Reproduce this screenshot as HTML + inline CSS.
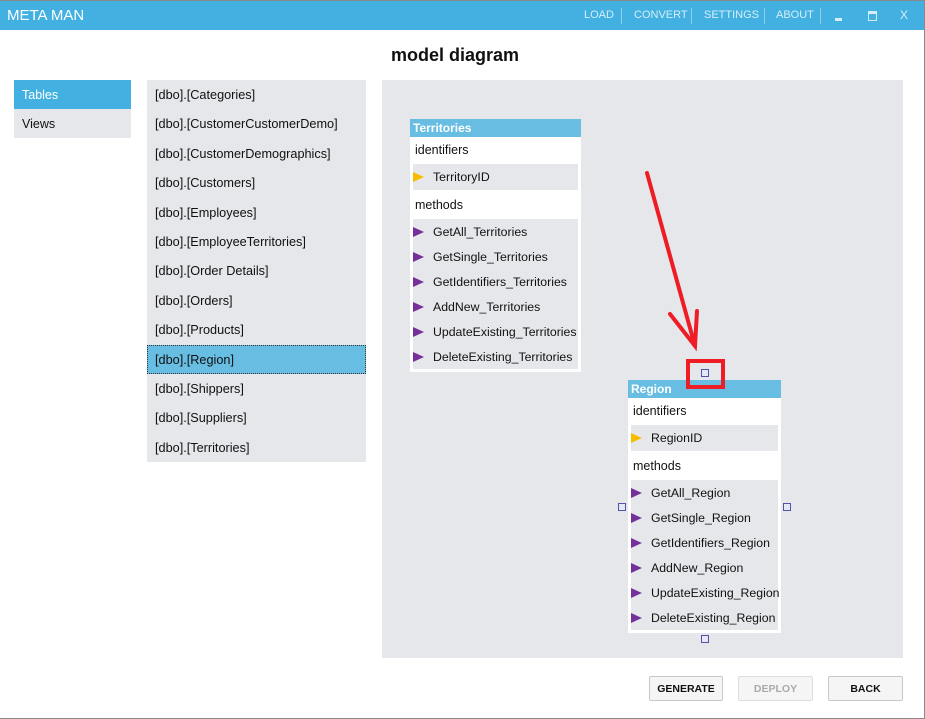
<!DOCTYPE html>
<html><head><meta charset="utf-8"><style>
*{margin:0;padding:0;box-sizing:border-box}
body{width:925px;height:719px;position:relative;overflow:hidden;background:#fff;font-family:"Liberation Sans",Tahoma,sans-serif;font-size:12px;color:#111}
.a{position:absolute}
#frame{left:0;top:0;width:925px;height:719px;border:1px solid #8a8a8a;border-left:none}
#title{left:0;top:1px;width:924px;height:29px;background:#42b0e1;color:#fff}
.nav{top:8px;font-size:11px;color:#d6eefa}
.sep{top:7px;width:1px;height:16px;background:#8fd0ee}
.nv{left:14px;width:117px;height:29px;line-height:30px;padding-left:8px;background:#e6e7eb;font-size:12.5px}
.li{left:147px;width:219px;height:29.4px;line-height:31px;padding-left:8px;background:#e6e7eb;font-size:12.7px}
.box{background:#fff}
.hd{background:#67bde2;color:#fff;font-weight:bold;padding-left:3px;height:18px;line-height:19px;font-size:12px}
.lab{height:27px;line-height:26px;padding-left:5px;font-size:12.5px}
.blk{background:#e6e7eb;margin:0 3px}
.row{height:25px;line-height:26px;padding-left:20px;position:relative;white-space:nowrap;font-size:12.3px}
.row:before{content:"";position:absolute;left:0;top:8px;border-left:11px solid #76309a;border-top:5px solid transparent;border-bottom:5px solid transparent}
.row.k:before{border-left-color:#f6bd00}
.h{width:8px;height:8px;border:1px solid #5252a8;background:#e6e7f4}
.btn{top:676px;height:25px;border:1px solid #c8c8c8;border-radius:2px;background:#f5f5f5;font-weight:bold;font-size:10.5px;text-align:center;line-height:24px}
</style></head><body>
<div class="a" id="title">
<div class="a" style="left:7px;top:6px;font-size:15px;color:#fff">META MAN</div>
<div class="a nav" style="left:584px">LOAD</div><div class="a sep" style="left:621px"></div>
<div class="a nav" style="left:634px">CONVERT</div><div class="a sep" style="left:691px"></div>
<div class="a nav" style="left:704px">SETTINGS</div><div class="a sep" style="left:764px"></div>
<div class="a nav" style="left:776px">ABOUT</div><div class="a sep" style="left:820px"></div>
<div class="a" style="left:835px;top:17px;width:7px;height:3px;background:#d6eefa"></div>
<div class="a" style="left:868px;top:10px;width:9px;height:10px;border:1px solid #d6eefa;border-top-width:3px"></div>
<div class="a nav" style="left:900px;top:7px;font-size:12px">X</div>
</div>
<div class="a" style="left:0;top:45px;width:910px;text-align:center;font-size:18px;font-weight:bold">model diagram</div>
<div class="a nv" style="top:80px;background:#42b0e1;color:#fff">Tables</div>
<div class="a nv" style="top:109px">Views</div>
<div class="a li" style="top:80px">[dbo].[Categories]</div>
<div class="a li" style="top:109.4px">[dbo].[CustomerCustomerDemo]</div>
<div class="a li" style="top:138.8px">[dbo].[CustomerDemographics]</div>
<div class="a li" style="top:168.2px">[dbo].[Customers]</div>
<div class="a li" style="top:197.6px">[dbo].[Employees]</div>
<div class="a li" style="top:227px">[dbo].[EmployeeTerritories]</div>
<div class="a li" style="top:256.4px">[dbo].[Order Details]</div>
<div class="a li" style="top:285.8px">[dbo].[Orders]</div>
<div class="a li" style="top:315.2px">[dbo].[Products]</div>
<div class="a li" style="top:344.6px;background:#67bde2;border:1px dotted #333;line-height:29px;padding-left:7px">[dbo].[Region]</div>
<div class="a li" style="top:374px">[dbo].[Shippers]</div>
<div class="a li" style="top:403.4px">[dbo].[Suppliers]</div>
<div class="a li" style="top:432.8px;height:29px">[dbo].[Territories]</div>
<div class="a" style="left:382px;top:80px;width:521px;height:578px;background:#e6e7eb"></div>
<div class="a box" style="left:410px;top:119px;width:171px;height:253px">
<div class="hd">Territories</div>
<div class="lab">identifiers</div>
<div class="blk"><div class="row k" style="height:26px;line-height:27px">TerritoryID</div></div>
<div class="lab" style="height:29px;line-height:30px">methods</div>
<div class="blk">
<div class="row">GetAll_Territories</div><div class="row">GetSingle_Territories</div><div class="row">GetIdentifiers_Territories</div><div class="row">AddNew_Territories</div><div class="row">UpdateExisting_Territories</div><div class="row">DeleteExisting_Territories</div>
</div></div>
<div class="a box" style="left:628px;top:380px;width:153px;height:253px">
<div class="hd">Region</div>
<div class="lab">identifiers</div>
<div class="blk"><div class="row k" style="height:26px;line-height:27px">RegionID</div></div>
<div class="lab" style="height:29px;line-height:30px">methods</div>
<div class="blk">
<div class="row">GetAll_Region</div><div class="row">GetSingle_Region</div><div class="row">GetIdentifiers_Region</div><div class="row">AddNew_Region</div><div class="row">UpdateExisting_Region</div><div class="row">DeleteExisting_Region</div>
</div></div>
<div class="a h" style="left:701px;top:369px"></div>
<div class="a h" style="left:618px;top:503px"></div>
<div class="a h" style="left:783px;top:503px"></div>
<div class="a h" style="left:701px;top:635px"></div>
<svg class="a" style="left:0;top:0" width="925" height="719">
<g stroke="#ee1c25" stroke-width="4" fill="none" stroke-linecap="round">
<line x1="647" y1="173" x2="695" y2="346"/>
<polyline points="670,314 695,346 697,311"/>
</g>
<rect x="688" y="361" width="35" height="26" stroke="#ee1c25" stroke-width="4" fill="none"/>
</svg>
<div class="a btn" style="left:649px;width:74px">GENERATE</div>
<div class="a btn" style="left:738px;width:75px;color:#aaa;border-color:#ddd">DEPLOY</div>
<div class="a btn" style="left:828px;width:75px">BACK</div>
<div class="a" id="frame"></div>
</body></html>
